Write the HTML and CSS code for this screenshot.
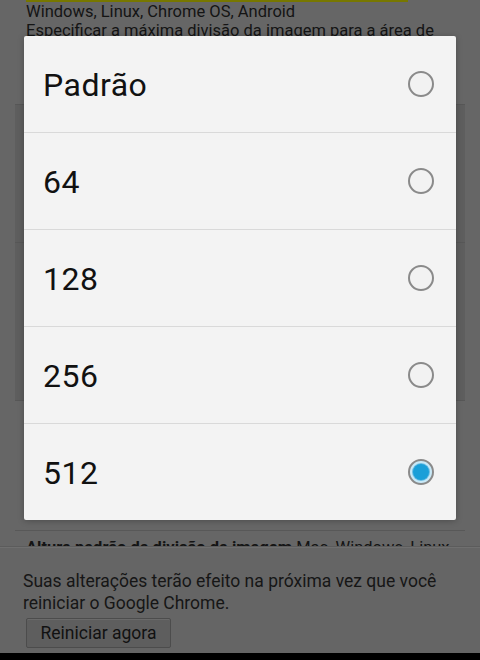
FILE: index.html
```html
<!DOCTYPE html>
<html lang="pt">
<head>
    <meta charset="UTF-8">
    <meta name="viewport" content="width=device-width, initial-scale=1.0">
    <title>Flags</title>
    <link rel="stylesheet" href="styles.css">
</head>
<body>
    <div class="screen">
        <div class="page">
            <div class="highlight"></div>
            <p class="line">Windows, Linux, Chrome OS, Android</p>
            <p class="line">Especificar a máxima divisão da imagem para a área de</p>

            <div class="cards">
                <div class="card card-first"></div>
                <div class="card card-second"></div>
            </div>

            <div class="next">
                <b>Altura padrão da divisão da imagem</b> Mac, Windows, Linux
            </div>
        </div>

        <div class="infobar">
            <p class="info-text">Suas alterações terão efeito na próxima vez que você reiniciar o Google Chrome.</p>
            <button class="restart">Reiniciar agora</button>
        </div>

        <div class="navbar"></div>

        <div class="dialog">
            <div class="option">
                <span class="label">Padrão</span>
                <span class="radio"></span>
            </div>
            <div class="option">
                <span class="label">64</span>
                <span class="radio"></span>
            </div>
            <div class="option">
                <span class="label">128</span>
                <span class="radio"></span>
            </div>
            <div class="option">
                <span class="label">256</span>
                <span class="radio"></span>
            </div>
            <div class="option">
                <span class="label">512</span>
                <span class="radio checked"></span>
            </div>
        </div>
    </div>
</body>
</html>
```

FILE: styles.css
```css
* {
    box-sizing: border-box;
    margin: 0;
    padding: 0;
}

body {
    background: #666666;
    font-family: Roboto, 'Noto Sans', sans-serif;
    overflow: hidden;
}

.screen {
    position: relative;
    width: 480px;
    height: 660px;
    overflow: hidden;
    background: #666666;
}

.page {
    color: #141414;
    font-size: 16.5px;
}

.highlight {
    height: 2px;
    width: 382px;
    margin-left: 26px;
    background: #777700;
}

.line {
    margin-left: 26px;
    line-height: 19px;
    white-space: nowrap;
}

.cards {
    margin: 64px 15px 0;
    background: #5e5e5e;
    border-top: 1px solid #575757;
}

.card {
    border-bottom: 1px solid #575757;
}

.card-first {
    height: 138px;
}

.card-second {
    height: 158px;
}

.next {
    margin: 129px 15px 0;
    border-top: 1px solid #585858;
    padding: 7px 11px 0;
    white-space: nowrap;
    font-size: 16.5px;
    line-height: 19px;
}

.infobar {
    position: absolute;
    left: 0;
    right: 0;
    top: 547px;
    height: 106px;
    background: #656565;
    border-top: 1px solid #6f6f6f;
    padding: 22px 23px 0;
    box-shadow: 0 -1px 0 #5c5c5c;
}

.info-text {
    color: #161616;
    font-size: 17.5px;
    line-height: 22px;
}

.restart {
    margin: 4px 0 0 3px;
    width: 145px;
    height: 30px;
    background: #5e5e5e;
    border: 1px solid #4c4c4c;
    border-radius: 2px;
    color: #111;
    font-family: Roboto, sans-serif;
    font-size: 17.5px;
    box-shadow: inset 0 1px 0 #6a6a6a;
}

.navbar {
    position: absolute;
    left: 0;
    right: 0;
    bottom: 0;
    height: 7px;
    background: #000;
}

.dialog {
    position: absolute;
    left: 24px;
    top: 36px;
    width: 432px;
    background: #f3f3f3;
    border-radius: 2px;
    box-shadow: 0 1px 6px rgba(0,0,0,0.25);
}

.option {
    height: 97px;
    display: flex;
    align-items: center;
    justify-content: space-between;
    padding: 0 22px 0 19px;
    border-top: 1px solid #d9d9d9;
}

.option:first-child {
    height: 96px;
    border-top: none;
}

.label {
    font-size: 32px;
    color: #111;
    letter-spacing: 0.5px;
    margin-top: 2px;
}

.radio {
    width: 26px;
    height: 26px;
    border-radius: 50%;
    border: 2px solid #8a8a8a;
    background: #f2f2f2;
    display: flex;
    align-items: center;
    justify-content: center;
}

.radio.checked {
    background: #c9e9f7;
}

.radio.checked::after {
    content: '';
    width: 16px;
    height: 16px;
    border-radius: 50%;
    background: #1a9fd8;
    box-shadow: 0 0 0 1px #6cbde3;
}
```
